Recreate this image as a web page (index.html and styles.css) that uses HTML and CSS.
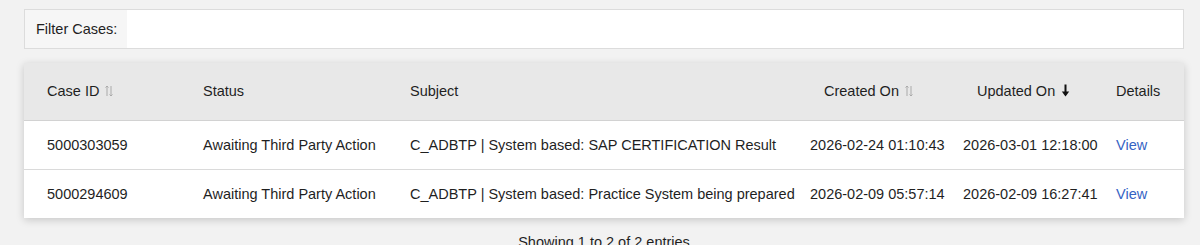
FILE: index.html
```html
<!DOCTYPE html>
<html lang="en">
<head>
    <meta charset="UTF-8">
    <title>Cases</title>
    <link rel="stylesheet" href="styles.css">
</head>
<body>
    <div class="filter">
        <label for="filter">Filter Cases:</label>
        <input type="text" id="filter">
    </div>

    <div class="card">
        <table class="cases">
            <colgroup>
                <col style="width: 171px">
                <col style="width: 207px">
                <col style="width: 400px">
                <col style="width: 153px">
                <col style="width: 153px">
                <col style="width: 76px">
            </colgroup>
            <thead>
                <tr>
                    <th>Case ID
                        <svg class="sort" width="8" height="12" viewBox="0 0 8 12"><path d="M2 11V1M0.5 2.5L2 1L3.5 2.5M6 1v10M4.5 9.5L6 11L7.5 9.5" fill="none" stroke="#aaa" stroke-width="1"/></svg>
                    </th>
                    <th>Status</th>
                    <th>Subject</th>
                    <th class="shift">Created On
                        <svg class="sort" width="8" height="12" viewBox="0 0 8 12"><path d="M2 11V1M0.5 2.5L2 1L3.5 2.5M6 1v10M4.5 9.5L6 11L7.5 9.5" fill="none" stroke="#aaa" stroke-width="1"/></svg>
                    </th>
                    <th class="shift">Updated On
                        <svg class="sort" width="9" height="13" viewBox="0 0 9 13"><path d="M4.5 0.5v10" stroke="#111" stroke-width="2"/><path d="M0.8 7.5L4.5 12.5L8.2 7.5z" fill="#111"/></svg>
                    </th>
                    <th>Details</th>
                </tr>
            </thead>
            <tbody>
                <tr>
                    <td>5000303059</td>
                    <td>Awaiting Third Party Action</td>
                    <td>C_ADBTP | System based: SAP CERTIFICATION Result</td>
                    <td>2026-02-24 01:10:43</td>
                    <td>2026-03-01 12:18:00</td>
                    <td><a href="#">View</a></td>
                </tr>
                <tr>
                    <td>5000294609</td>
                    <td>Awaiting Third Party Action</td>
                    <td>C_ADBTP | System based: Practice System being prepared</td>
                    <td>2026-02-09 05:57:14</td>
                    <td>2026-02-09 16:27:41</td>
                    <td><a href="#">View</a></td>
                </tr>
            </tbody>
        </table>
    </div>

    <div class="info">Showing 1 to 2 of 2 entries</div>
</body>
</html>
```

FILE: styles.css
```css
* {
    margin: 0;
    padding: 0;
    box-sizing: border-box;
}
body {
    font-family: 'Liberation Sans', Arial, sans-serif;
    font-size: 14.5px;
    color: #1f1f1f;
    background-color: #f2f2f2;
    padding: 9px 16px 0 24px;
}
.filter {
    display: flex;
    height: 40px;
    border: 1px solid #dcdcdc;
    background-color: #fff;
}
.filter label {
    display: flex;
    align-items: center;
    width: 102px;
    padding-left: 11px;
    background-color: #f6f6f6;
}
.filter input {
    flex: 1;
    border: none;
    outline: none;
    background: #fff;
}
.card {
    margin-top: 14px;
    background-color: #fff;
    box-shadow: 0 2px 8px rgba(0, 0, 0, 0.18);
}
.cases {
    width: 100%;
    border-collapse: collapse;
    table-layout: fixed;
}
.cases th {
    height: 57px;
    background-color: #e8e8e8;
    border-bottom: 1px solid #d2d2d2;
    font-weight: normal;
    text-align: left;
    padding: 0 7px 0 8px;
    white-space: nowrap;
}
.cases th.shift {
    padding-left: 22px;
}
.cases td {
    height: 49px;
    padding: 0 7px 0 8px;
    white-space: nowrap;
    border-bottom: 1px solid #dadada;
}
.cases tr:last-child td {
    border-bottom: none;
}
.cases th:first-child, .cases td:first-child {
    padding-left: 23px;
}
.sort {
    vertical-align: -1px;
    margin-left: 2px;
}
.cases a {
    color: #3563c4;
    text-decoration: none;
}
.info {
    text-align: center;
    margin-top: 16px;
}
```
